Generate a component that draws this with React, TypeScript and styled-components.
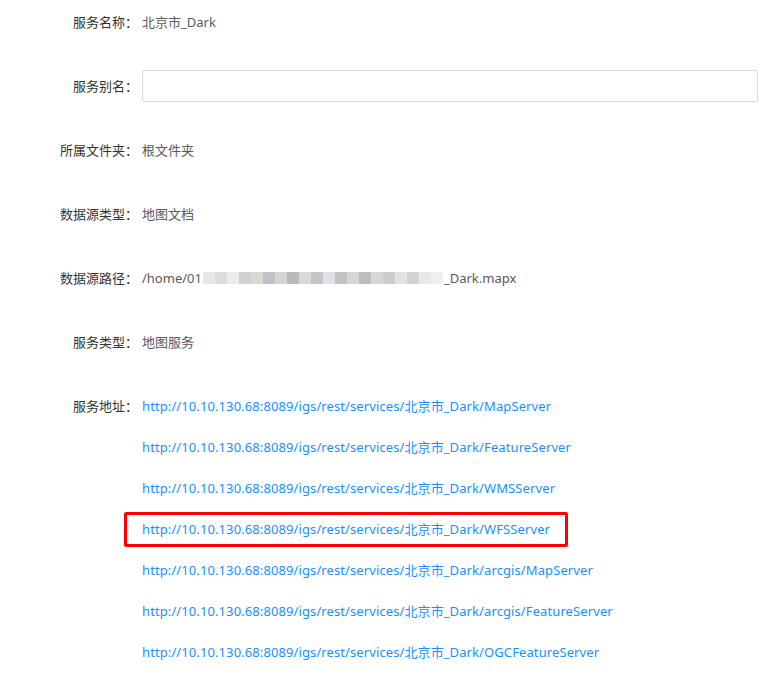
import React from "react";
import styled, { createGlobalStyle } from "styled-components";

const GlobalStyle = createGlobalStyle`
  html, body {
    margin: 0;
    padding: 0;
    background: #fff;
  }
  body {
    font-family: "Noto Sans", "Noto Sans CJK SC", sans-serif;
    font-size: 13px;
    color: #333;
  }
`;

const BASE = "http://10.10.130.68:8089/igs/rest/services/北京市_Dark/";

const addresses = [
  { path: "MapServer" },
  { path: "FeatureServer" },
  { path: "WMSServer" },
  { path: "WFSServer", marked: true },
  { path: "arcgis/MapServer" },
  { path: "arcgis/FeatureServer" },
  { path: "OGCFeatureServer" },
];

// pixelated blur over the hidden part of the path
const mosaicTones = [
  "#e9e6e2", "#dcdcdf", "#eeeaea", "#d2d0d4", "#dbd7d2", "#c4c1c6",
  "#d3d4d8", "#bcb9bd", "#dcd8da", "#c6c4ca", "#e0e0e6", "#c3c1c2",
  "#d4d6da", "#bebcbf", "#d8d6d8", "#cbcbd0", "#e2e2e4", "#d0d2d6",
  "#e8e8ea", "#f0f0f0",
];

export default function App() {
  return (
    <>
      <GlobalStyle />
      <Form>
        <Row>
          <Label>服务名称：</Label>
          <Value>北京市_Dark</Value>
        </Row>
        <Row>
          <Label>服务别名：</Label>
          <Input type="text" />
        </Row>
        <Row>
          <Label>所属文件夹：</Label>
          <Value>根文件夹</Value>
        </Row>
        <Row>
          <Label>数据源类型：</Label>
          <Value>地图文档</Value>
        </Row>
        <Row>
          <Label>数据源路径：</Label>
          <Value>
            /home/01
            <Mosaic>
              {mosaicTones.map((c, i) => (
                <Tile key={i} style={{ background: c }} />
              ))}
            </Mosaic>
            _Dark.mapx
          </Value>
        </Row>
        <Row>
          <Label>服务类型：</Label>
          <Value>地图服务</Value>
        </Row>
        <Row>
          <Label>服务地址：</Label>
          <LinkList>
            {addresses.map((a) => (
              <LinkItem key={a.path}>
                <Link href="#">
                  {BASE + a.path}
                  {a.marked && <Frame />}
                </Link>
              </LinkItem>
            ))}
          </LinkList>
        </Row>
      </Form>
    </>
  );
}

const Form = styled.div`
  display: flex;
  flex-direction: column;
  gap: 32px;
  padding: 6px 0 4px;
  width: 784px;
  box-sizing: border-box;
`;

const Row = styled.div`
  display: grid;
  grid-template-columns: 142px 1fr;
  align-items: start;
  padding-right: 26px;
`;

const Label = styled.div`
  height: 32px;
  line-height: 32px;
  text-align: right;
  color: #333;
  white-space: nowrap;
  padding-right: 4px;
`;

const Value = styled.div`
  height: 32px;
  line-height: 32px;
  color: #595959;
  white-space: nowrap;
  display: flex;
  align-items: center;
`;

const Mosaic = styled.span`
  display: inline-flex;
  width: 240px;
  height: 12px;
  margin: 0 1px;
  filter: blur(0.6px);
`;

const Tile = styled.span`
  flex: 1;
  height: 100%;
`;

const Input = styled.input`
  height: 32px;
  width: 100%;
  box-sizing: border-box;
  border: 1px solid #d9d9d9;
  border-radius: 2px;
  padding: 4px 11px;
  font: inherit;
  outline: none;
`;

const LinkList = styled.div`
  display: flex;
  flex-direction: column;
`;

const LinkItem = styled.div`
  height: 41px;
  line-height: 32px;
`;

const Link = styled.a`
  position: relative;
  display: inline-block;
  color: #1890ff;
  text-decoration: none;
  white-space: nowrap;
  letter-spacing: 0.1px;
`;

const Frame = styled.span`
  position: absolute;
  left: -18px;
  right: -18px;
  top: -1px;
  bottom: -2px;
  border: 3px solid #ff0000;
  border-radius: 2px;
  pointer-events: none;
`;
